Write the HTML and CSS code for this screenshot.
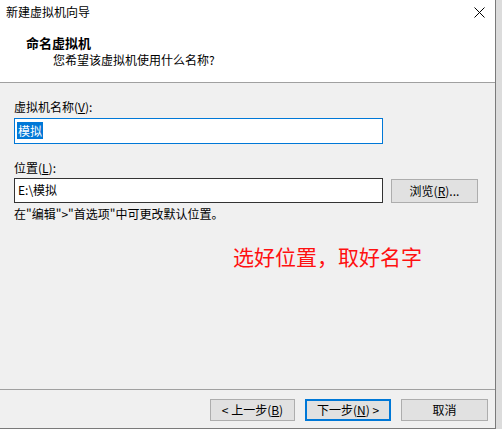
FILE: index.html
```html
<!DOCTYPE html>
<html lang="zh-CN">
<head>
<meta charset="utf-8">
<title>新建虚拟机向导</title>
<link rel="stylesheet" href="styles.css">
</head>
<body>
<div class="window">
  <div class="header">
    <div class="titlebar">
      <span class="title">新建虚拟机向导</span>
      <svg class="close" width="11" height="11" viewBox="0 0 11 11"><path d="M0.5 0.5 L10.5 10.5 M10.5 0.5 L0.5 10.5" stroke="#000" stroke-width="1" fill="none"/></svg>
    </div>
    <div class="heading">命名虚拟机</div>
    <div class="subtitle">您希望该虚拟机使用什么名称?</div>
  </div>
  <div class="content">
    <div class="label">虚拟机名称(<u>V</u>):</div>
    <div class="input focused"><span class="sel">模拟</span></div>
    <div class="label label2">位置(<u>L</u>):</div>
    <div class="row">
      <div class="input path">E:\模拟</div>
      <div class="btn browse">浏览(<u>R</u>)...</div>
    </div>
    <div class="hint">在"编辑"&gt;"首选项"中可更改默认位置。</div>
    <div class="note">选好位置，取好名字</div>
  </div>
  <div class="footer">
    <div class="btn">&lt; 上一步(<u>B</u>)</div>
    <div class="btn default">下一步(<u>N</u>) &gt;</div>
    <div class="btn">取消</div>
  </div>
</div>
</body>
</html>
```
FILE: styles.css
```css
html, body {
  margin: 0;
  padding: 0;
  background: #dcdcdc;
}
body {
  font-family: "Noto Sans CJK SC", "Noto Sans", sans-serif;
  font-size: 12px;
  color: #000;
  width: 502px;
  height: 429px;
  overflow: hidden;
}
.window {
  width: 495px;
  height: 428px;
  border-right: 1px solid #7a7a7a;
  border-bottom: 1px solid #7a7a7a;
  background: #f0f0f0;
  display: flex;
  flex-direction: column;
}
.header {
  background: #fff;
  height: 82px;
  border-bottom: 1px solid #a0a0a0;
  display: flex;
  flex-direction: column;
}
.titlebar {
  height: 24px;
  line-height: 24px;
  padding: 0 10px 0 6px;
  display: flex;
  justify-content: space-between;
  align-items: center;
}
.title {
  color: #000;
}
.close {
  display: block;
}
.heading {
  margin-top: 11px;
  padding-left: 26px;
  line-height: 16px;
  font-size: 13px;
  font-weight: bold;
}
.subtitle {
  margin-top: 1px;
  padding-left: 53px;
  line-height: 16px;
}
.content {
  flex: 1;
  padding-left: 14px;
  display: flex;
  flex-direction: column;
}
.label {
  margin-top: 16px;
  line-height: 16px;
}
.label2 {
  margin-top: 16px;
}
.input {
  box-sizing: border-box;
  width: 369px;
  background: #fff;
  line-height: 20px;
  padding-left: 3px;
}
.focused {
  margin-top: 3px;
  height: 26px;
  border: 1px solid #0078d7;
  padding-top: 2px;
  padding-left: 2px;
}
.sel {
  background: #0078d7;
  color: #fff;
  display: inline-block;
  line-height: 17px;
  padding: 0 1px;
}
.row {
  margin-top: 2px;
  display: flex;
  align-items: flex-start;
  gap: 8px;
}
.path {
  height: 25px;
  border: 1px solid #333;
  line-height: 22px;
}
.btn {
  box-sizing: border-box;
  width: 85px;
  height: 22px;
  background: #e1e1e1;
  border: 1px solid #adadad;
  text-align: center;
  line-height: 20px;
}
.browse {
  margin-top: 1px;
  width: 87px;
  height: 24px;
  line-height: 22px;
}
.hint {
  margin-top: 3px;
  line-height: 16px;
}
.note {
  margin-top: 22px;
  padding-left: 219px;
  font-size: 21px;
  line-height: 24px;
  color: #ff1010;
}
.footer {
  border-top: 1px solid #a0a0a0;
  height: 39px;
  padding: 9px 7px 0 0;
  box-sizing: border-box;
  display: flex;
  justify-content: flex-end;
  gap: 10px;
}
.default {
  border: 2px solid #0078d7;
  line-height: 18px;
  width: 86px;
}
.footer .btn:last-child {
  width: 87px;
}
```
